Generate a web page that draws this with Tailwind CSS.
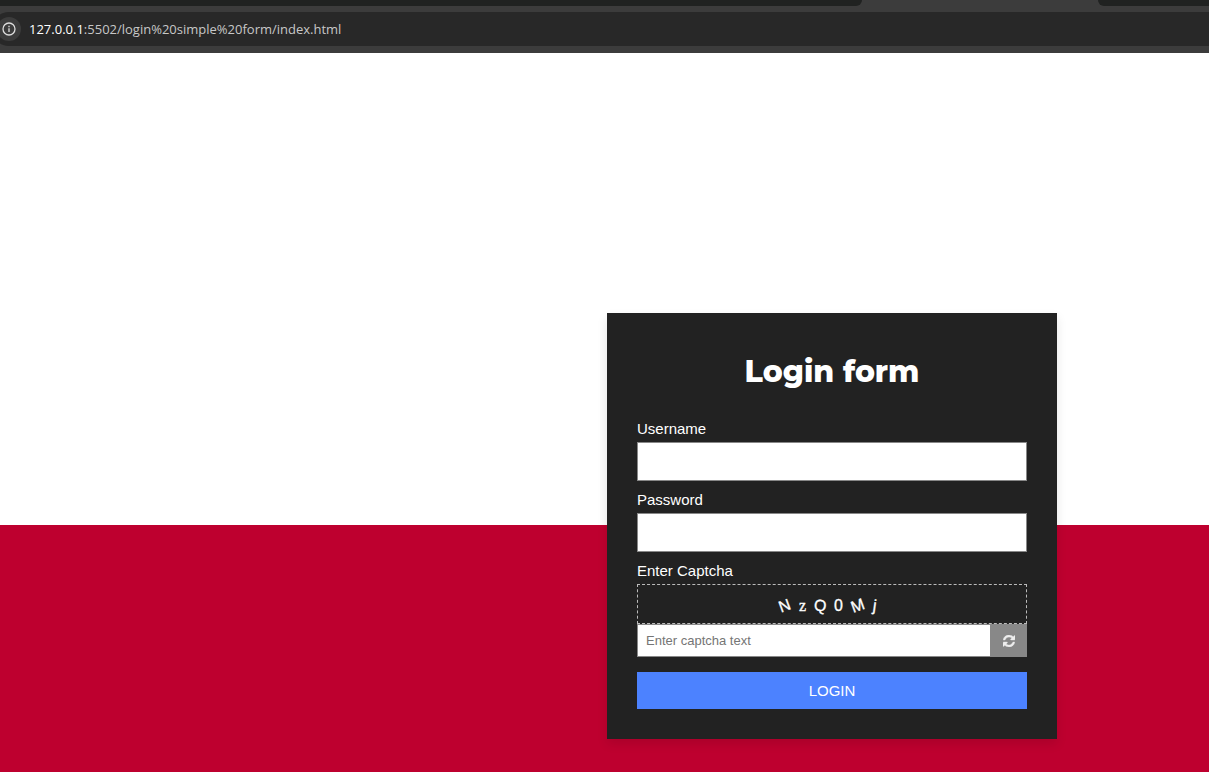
<!DOCTYPE html>
<html lang="en">
<head>
<meta charset="utf-8">
<title>Login form</title>
<script src="https://cdn.jsdelivr.net/npm/@tailwindcss/browser@4"></script>
</head>
<body class="flex min-h-screen flex-col overflow-x-hidden bg-white font-['Liberation_Sans',Arial,sans-serif]">
<header class="bg-[#3c3c3c]">
  <div class="flex h-1.5 justify-between">
    <div class="w-[862px] rounded-br-xl bg-[#202221]"></div>
    <div class="w-[111px] rounded-bl-xl bg-[#202221]"></div>
  </div>
  <div class="pt-1.5 pb-[7px]">
    <div class="-ml-2 flex h-[34px] items-center gap-2 rounded-l-full bg-[#282828] pl-[5px]">
      <button type="button" aria-label="Site information" class="flex size-6 items-center justify-center rounded-full bg-[#3c3c3c]">
        <svg class="size-4" viewBox="0 0 16 16" fill="none" stroke="#dcdcdc" stroke-width="1.3"><circle cx="8" cy="8" r="6"/><path d="M8 7.3v3.6M8 4.8v1.4"/></svg>
      </button>
      <p class="font-['Open_Sans',sans-serif] text-[13px] leading-5 text-[#c7c7c7]"><span class="text-white">127.0.0.1</span>:5502/login%20simple%20form/index.html</p>
    </div>
  </div>
</header>
<main class="flex flex-1 items-start justify-end bg-[linear-gradient(#fff_472px,#be002f_472px)] pt-[260px] pr-[152px] pb-8">
  <form class="w-[450px] bg-[#222] p-[30px] text-[15px] text-white shadow-[0_5px_10px_rgba(0,0,0,0.1)]">
    <h1 class="mb-[18px] text-center font-[Montserrat,Inter,sans-serif] text-[30px] leading-[58px] font-extrabold">Login form</h1>
    <div class="mb-[9px]">
      <label for="user" class="mb-[3px] block leading-5">Username</label>
      <input id="user" type="text" class="block h-[39px] w-full border border-[#888] bg-white px-2 text-black">
    </div>
    <div class="mb-[9px]">
      <label for="pass" class="mb-[3px] block leading-5">Password</label>
      <input id="pass" type="password" class="block h-[39px] w-full border border-[#888] bg-white px-2 text-black">
    </div>
    <div class="mb-[15px]">
      <label for="captcha" class="mb-[3px] block leading-5">Enter Captcha</label>
      <div class="flex h-10 items-center justify-center gap-2 border border-dashed border-[#bbb] pt-1 pr-2 text-base leading-5 font-medium [-webkit-text-stroke:0.3px_white]">
        <span class="w-3 -rotate-20">N</span>
        <span class="font-['Liberation_Serif',serif]">z</span>
        <span class="w-3 rotate-6">Q</span>
        <span>0</span>
        <span class="w-3.5 -rotate-20">M</span>
        <span class="w-1 rotate-8">j</span>
      </div>
      <div class="flex h-[33px]">
        <input id="captcha" type="text" placeholder="Enter captcha text" class="min-w-0 flex-1 border border-r-0 border-[#888] bg-white px-2 text-[13px] text-black placeholder:text-[#757575]">
        <button type="button" aria-label="Refresh captcha" class="flex w-[37px] items-center justify-center bg-[#888] text-[#eee]">
          <svg class="size-3" viewBox="0 0 1536 1536" fill="currentColor" stroke="currentColor" stroke-width="50"><path d="M1511 928q0 5-1 7-64 268-268 434.500T764 1536q-146 0-282.500-55T238 1324l-129 129q-19 19-45 19t-45-19-19-45V960q0-26 19-45t45-19h448q26 0 45 19t19 45-19 45l-137 137q71 66 161 102t187 36q134 0 250-65t186-179q11-17 53-117 8-23 30-23h192q13 0 22.500 9.500t9.500 22.500zm25-800v448q0 26-19 45t-45 19h-448q-26 0-45-19t-19-45 19-45l138-138Q969 256 768 256q-134 0-250 65T332 500q-11 17-53 117-8 23-30 23H50q-13 0-22.500-9.500T18 608v-7q65-268 270-434.500T768 0q146 0 284 55.500T1297 212l130-129q19-19 45-19t45 19 19 45z"/></svg>
        </button>
      </div>
    </div>
    <button type="submit" class="block h-[37px] w-full bg-[#4c82ff] pt-px text-center">LOGIN</button>
  </form>
</main>
</body>
</html>
